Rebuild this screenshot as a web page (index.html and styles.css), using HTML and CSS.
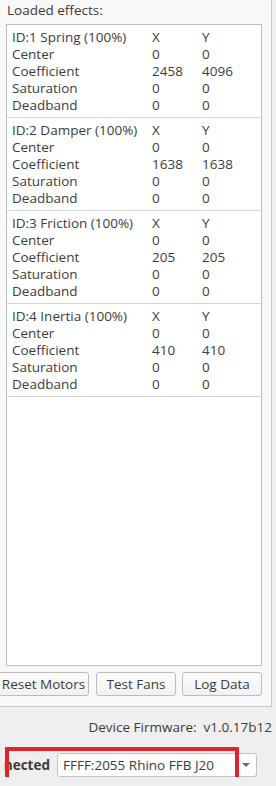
FILE: index.html
```html
<!DOCTYPE html>
<html lang="en">
<head>
    <meta charset="UTF-8">
    <title>FFB Effects</title>
    <link rel="stylesheet" href="styles.css">
</head>
<body>
    <div class="panel">
        <div class="caption">Loaded effects:</div>
        <div class="effect-list">
            <div class="effect">
                <span>ID:1 Spring (100%)</span><span>X</span><span>Y</span>
                <span>Center</span><span>0</span><span>0</span>
                <span>Coefficient</span><span>2458</span><span>4096</span>
                <span>Saturation</span><span>0</span><span>0</span>
                <span>Deadband</span><span>0</span><span>0</span>
            </div>
            <div class="effect">
                <span>ID:2 Damper (100%)</span><span>X</span><span>Y</span>
                <span>Center</span><span>0</span><span>0</span>
                <span>Coefficient</span><span>1638</span><span>1638</span>
                <span>Saturation</span><span>0</span><span>0</span>
                <span>Deadband</span><span>0</span><span>0</span>
            </div>
            <div class="effect">
                <span>ID:3 Friction (100%)</span><span>X</span><span>Y</span>
                <span>Center</span><span>0</span><span>0</span>
                <span>Coefficient</span><span>205</span><span>205</span>
                <span>Saturation</span><span>0</span><span>0</span>
                <span>Deadband</span><span>0</span><span>0</span>
            </div>
            <div class="effect">
                <span>ID:4 Inertia (100%)</span><span>X</span><span>Y</span>
                <span>Center</span><span>0</span><span>0</span>
                <span>Coefficient</span><span>410</span><span>410</span>
                <span>Saturation</span><span>0</span><span>0</span>
                <span>Deadband</span><span>0</span><span>0</span>
            </div>
        </div>
        <div class="button-row">
            <button class="btn btn-reset">Reset Motors</button>
            <button class="btn btn-fans">Test Fans</button>
            <button class="btn btn-log">Log Data</button>
        </div>
    </div>

    <div class="firmware">Device Firmware:&nbsp; v1.0.17b12</div>

    <div class="device-row">
        <span class="status">nected</span>
        <div class="combo">
            <span class="combo-text">FFFF:2055 Rhino FFB J20</span>
            <span class="combo-arrow"></span>
        </div>
        <div class="highlight"></div>
    </div>
</body>
</html>
```

FILE: styles.css
```css
body {
    margin: 0;
    background-color: #efefef;
    font-family: "Open Sans", "DejaVu Sans", sans-serif;
    font-size: 13.5px;
    color: #3c3c3c;
    overflow: hidden;
}
.panel {
    width: 271px;
    background-color: #f8f8f8;
    border-right: 1px solid #c9c9c9;
    border-bottom: 1px solid #c9c9c9;
    padding: 1px 0 10px 0;
}
.caption {
    line-height: 18px;
    padding-left: 7px;
}
.effect-list {
    margin: 5px 0 0 6px;
    width: 254px;
    height: 640px;
    background-color: white;
    border: 1px solid #bdbdbd;
}
.effect {
    display: grid;
    grid-template-columns: 140px 50px auto;
    grid-auto-rows: 17px;
    align-items: center;
    line-height: 17px;
    padding: 4px 0 3px 5px;
    border-bottom: 1px solid #d3d3d3;
    white-space: nowrap;
}
.button-row {
    display: flex;
    gap: 6px;
    margin: 6px 0 0 -2px;
}
.btn {
    height: 24px;
    padding: 0;
    font-family: inherit;
    font-size: 13.5px;
    color: #3c3c3c;
    background: linear-gradient(#fcfcfc, #f1f1f1);
    border: 1px solid #bcbcbc;
    border-radius: 3px;
    white-space: nowrap;
}
.btn-reset {
    width: 91px;
}
.btn-fans {
    width: 80px;
    margin-left: 1px;
}
.btn-log {
    width: 80px;
}
.firmware {
    text-align: right;
    line-height: 18px;
    margin-top: 11px;
    padding-right: 4px;
}
.device-row {
    position: relative;
    display: flex;
    align-items: center;
    gap: 7px;
    margin-top: 17px;
}
.status {
    font-weight: bold;
    width: 50px;
    text-align: right;
}
.combo {
    display: flex;
    align-items: center;
    width: 198px;
    height: 22px;
    background-color: #fdfdfd;
    border: 1px solid #c2c2c2;
    border-radius: 3px;
}
.combo-text {
    flex: 1;
    padding-left: 5px;
    white-space: nowrap;
}
.combo-arrow {
    width: 0;
    height: 0;
    margin-right: 6px;
    border-left: 4px solid transparent;
    border-right: 4px solid transparent;
    border-top: 4px solid #6a6a6a;
}
.highlight {
    position: absolute;
    left: 5px;
    top: -6px;
    width: 226px;
    height: 31px;
    border: 4px solid #e3232a;
}
```
